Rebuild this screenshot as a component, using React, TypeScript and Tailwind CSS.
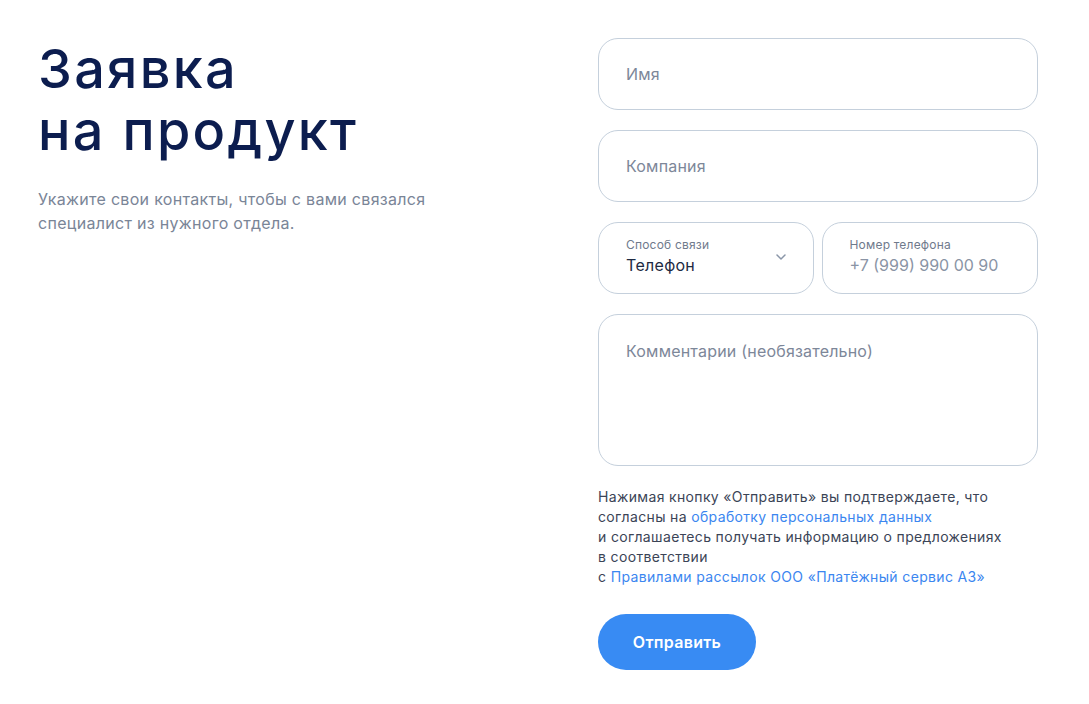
import { useState } from "react";

const font = { fontFamily: "Inter, 'Noto Sans', sans-serif" };

function Field({ placeholder }: { placeholder: string }) {
  return (
    <input
      type="text"
      placeholder={placeholder}
      className="h-[72px] w-full rounded-[20px] border border-[#c5d0dc] bg-white px-[27px] text-[16px] tracking-[0.2px] text-[#1a2540] placeholder:text-[#7d8799] focus:outline-none"
    />
  );
}

export default function App() {
  const [comment, setComment] = useState("");

  return (
    <div className="min-h-[704px] bg-white text-[#0d1d4e]" style={font}>
      <div className="flex pl-[38px] pr-[51px] pt-[38px]">
        {/* Heading */}
        <div className="flex-1">
          <h1 className="text-[54px] font-medium leading-[62px] tracking-[2.3px] text-[#0c1d4f]">
            Заявка
            <br />
            на продукт
          </h1>
          <p className="mt-[25px] w-[420px] text-[16px] leading-[24px] tracking-[0.3px] text-[#7a8597]">
            Укажите свои контакты, чтобы с вами связался специалист из нужного отдела.
          </p>
        </div>

        {/* Form */}
        <form className="flex w-[440px] flex-col" onSubmit={(e) => e.preventDefault()}>
          <Field placeholder="Имя" />
          <div className="mt-[20px]">
            <Field placeholder="Компания" />
          </div>

          <div className="mt-[20px] flex gap-[8px]">
            <button
              type="button"
              className="flex h-[72px] flex-1 items-center justify-between rounded-[20px] border border-[#c5d0dc] pb-[4px] pl-[27px] pr-[26px] text-left"
            >
              <span className="flex flex-col">
                <span className="text-[12px] leading-[16px] tracking-[0.2px] text-[#6f7a8c]">Способ связи</span>
                <span className="mt-[2px] text-[16px] leading-[20px] tracking-[0.3px] text-[#1e2a42]">Телефон</span>
              </span>
              <svg className="mt-[2px] h-[12px] w-[12px] text-[#8a96a8]" viewBox="0 0 12 12" fill="none">
                <path d="M2 4l4 4 4-4" stroke="currentColor" strokeWidth="1.5" strokeLinecap="round" strokeLinejoin="round" />
              </svg>
            </button>
            <label className="flex h-[72px] flex-1 flex-col justify-center rounded-[20px] border border-[#c5d0dc] pb-[4px] px-[27px]">
              <span className="text-[12px] leading-[16px] tracking-[0.2px] text-[#6f7a8c]">Номер телефона</span>
              <input
                type="tel"
                placeholder="+7 (999) 990 00 90"
                className="mt-[2px] w-full bg-transparent text-[16px] leading-[20px] text-[#1e2a42] placeholder:text-[#8a94a5] focus:outline-none"
              />
            </label>
          </div>

          <textarea
            value={comment}
            onChange={(e) => setComment(e.target.value)}
            placeholder="Комментарии (необязательно)"
            className="mt-[20px] h-[152px] w-full resize-none rounded-[20px] border border-[#c5d0dc] px-[27px] pt-[26px] text-[16px] leading-[20px] tracking-[0.2px] text-[#1a2540] placeholder:text-[#7d8799] focus:outline-none"
          />

          <p className="mt-[21px] text-[14px] leading-[20px] tracking-[0.35px] text-[#3b4456]">
            Нажимая кнопку «Отправить» вы подтверждаете, что
            <br />
            согласны на{" "}
            <a href="#" className="text-[#3b86f0]">
              обработку персональных данных
            </a>
            <br />
            и соглашаетесь получать информацию о предложениях
            <br />
            в соответствии
            <br />
            с{" "}
            <a href="#" className="text-[#3b86f0]">
              Правилами рассылок ООО «Платёжный сервис А3»
            </a>
          </p>

          <button
            type="submit"
            className="mt-[27px] h-[56px] w-[158px] rounded-full bg-[#388bf3] text-[16px] font-semibold tracking-[0.3px] text-white"
          >
            Отправить
          </button>
        </form>
      </div>
    </div>
  );
}
